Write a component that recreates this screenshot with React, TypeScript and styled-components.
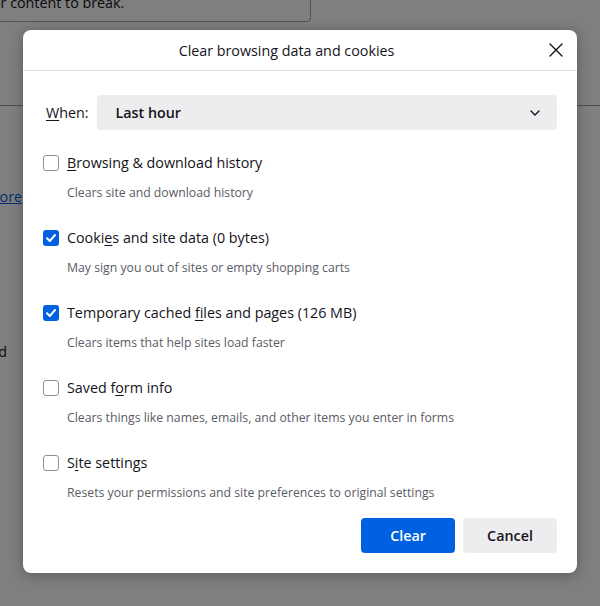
import React from "react";
import styled, { createGlobalStyle } from "styled-components";

const FONT = `"Open Sans", "Noto Sans", "Liberation Sans", sans-serif`;

const GlobalStyle = createGlobalStyle`
  html, body { margin: 0; padding: 0; }
  body { font-family: ${FONT}; overflow: hidden; background: #fff; }
  * { box-sizing: border-box; }
`;

/* ---------- background page ---------- */
const Page = styled.div`
  position: relative;
  width: 600px;
  height: 606px;
  overflow: hidden;
  background: #ffffff;
  color: #15141a;
  font-size: 14.3px;
  line-height: 20px;
`;

const PageContent = styled.div`
  display: flex;
  flex-direction: column;
`;

const NoticeBox = styled.div`
  margin: -20px 0 0 -30px;
  width: 341px;
  padding: 12px 10px 8px 21px;
  border: 1px solid #a8a8b0;
  border-radius: 4px;
`;

const Rule = styled.div`
  margin-top: 83px;
  height: 1px;
  background: #9f9fa6;
`;

const BgLine = styled.div<{ $top: number; $end: number }>`
  margin-top: ${(p) => p.$top}px;
  margin-left: -200px;
  width: ${(p) => 200 + p.$end}px;
  text-align: right;
  white-space: nowrap;
`;

const BgLink = styled.a`
  color: #0061e0;
  text-decoration: underline;
`;

/* ---------- overlay + dialog ---------- */
const Overlay = styled.div`
  position: absolute;
  inset: 0;
  background: rgba(0, 0, 0, 0.5);
  display: flex;
  justify-content: center;
  align-items: flex-start;
  padding-top: 30px;
`;

const Dialog = styled.div`
  width: 554px;
  background: #ffffff;
  border-radius: 8px;
  box-shadow: 0 2px 14px rgba(0, 0, 0, 0.3);
  display: flex;
  flex-direction: column;
  color: #15141a;
  font-family: ${FONT};
`;

const Header = styled.div`
  height: 41px;
  display: flex;
  align-items: center;
  padding-right: 7px;
  border-bottom: 1px solid #e0e0e6;
`;

const Title = styled.h1`
  flex: 1;
  margin: 0;
  padding: 1px 0 0 8px;
  text-align: center;
  font-size: 14.3px;
  font-weight: 500;
  line-height: 20px;
`;

const CloseButton = styled.button`
  width: 28px;
  height: 28px;
  border: none;
  background: transparent;
  padding: 0;
  display: flex;
  align-items: center;
  justify-content: center;
  color: #15141a;
`;

const Body = styled.div`
  padding: 24px 20px 20px 20px;
  display: flex;
  flex-direction: column;
`;

const WhenRow = styled.div`
  display: flex;
  align-items: center;
  gap: 8px;
`;

const WhenLabel = styled.label`
  padding-left: 3px;
  font-size: 14.3px;
  line-height: 20px;
`;

const AccessKey = styled.span`
  text-decoration: underline;
  text-underline-offset: 2px;
  text-decoration-thickness: 1px;
`;

const Select = styled.div`
  flex: 1;
  height: 35px;
  border-radius: 4px;
  background: #ededf0;
  display: flex;
  align-items: center;
  justify-content: space-between;
  padding: 0 17px 0 19px;
  font-size: 14.3px;
  font-weight: 600;
`;

const Options = styled.div`
  margin-top: 23px;
  display: flex;
  flex-direction: column;
  gap: 25px;
`;

const Option = styled.div`
  display: flex;
  flex-direction: column;
  gap: 10px;
`;

const OptionLine = styled.label`
  display: flex;
  align-items: center;
  gap: 8px;
  height: 20px;
  font-size: 14.3px;
  line-height: 20px;
`;

const Box = styled.span<{ $checked: boolean }>`
  width: 16px;
  height: 16px;
  flex: none;
  border-radius: 3px;
  border: ${(p) => (p.$checked ? "none" : "1px solid #8f8f9d")};
  background: ${(p) => (p.$checked ? "#0061e0" : "#ffffff")};
  display: flex;
  align-items: center;
  justify-content: center;
`;

const Description = styled.div`
  padding-left: 24px;
  height: 20px;
  font-size: 12.25px;
  line-height: 20px;
  color: #5b5b66;
`;

const Footer = styled.div`
  margin-top: 15px;
  display: flex;
  justify-content: flex-end;
  gap: 8px;
`;

const Button = styled.button<{ $primary?: boolean }>`
  min-width: 94px;
  height: 35px;
  padding: 0 16px;
  border: none;
  border-radius: 4px;
  font-family: ${FONT};
  font-size: 14.3px;
  font-weight: 600;
  background: ${(p) => (p.$primary ? "#0061e0" : "#ededf0")};
  color: ${(p) => (p.$primary ? "#ffffff" : "#15141a")};
`;

type Item = {
  pre: string;
  key: string;
  post: string;
  desc: string;
  checked: boolean;
};

const items: Item[] = [
  { pre: "", key: "B", post: "rowsing & download history", desc: "Clears site and download history", checked: false },
  { pre: "Cooki", key: "e", post: "s and site data (0 bytes)", desc: "May sign you out of sites or empty shopping carts", checked: true },
  { pre: "Temporary cached ", key: "f", post: "iles and pages (126 MB)", desc: "Clears items that help sites load faster", checked: true },
  { pre: "Saved f", key: "o", post: "rm info", desc: "Clears things like names, emails, and other items you enter in forms", checked: false },
  { pre: "S", key: "i", post: "te settings", desc: "Resets your permissions and site preferences to original settings", checked: false },
];

const Check = () => (
  <svg width="12" height="12" viewBox="0 0 12 12" fill="none">
    <path d="M2 6.3 L4.8 9 L10 3" stroke="#fff" strokeWidth="2" strokeLinecap="round" strokeLinejoin="round" />
  </svg>
);

export default function App() {
  return (
    <>
      <GlobalStyle />
      <Page>
        <PageContent>
          <NoticeBox>or content to break.</NoticeBox>
          <Rule />
          <BgLine $top={81} $end={22}>
            <BgLink>Learn more</BgLink>
          </BgLine>
          <BgLine $top={135} $end={7}>
            Cookies will be saved
          </BgLine>
        </PageContent>
        <Overlay>
          <Dialog>
            <Header>
              <Title>Clear browsing data and cookies</Title>
              <CloseButton aria-label="Close">
                <svg width="14" height="14" viewBox="0 0 14 14" fill="none">
                  <path d="M1 1 L13 13 M13 1 L1 13" stroke="#15141a" strokeWidth="1.4" strokeLinecap="round" />
                </svg>
              </CloseButton>
            </Header>
            <Body>
              <WhenRow>
                <WhenLabel>
                  <AccessKey>W</AccessKey>hen:
                </WhenLabel>
                <Select>
                  <span>Last hour</span>
                  <svg width="10" height="6" viewBox="0 0 10 6" fill="none">
                    <path d="M1 1 L5 5 L9 1" stroke="#15141a" strokeWidth="1.4" strokeLinecap="round" strokeLinejoin="round" />
                  </svg>
                </Select>
              </WhenRow>
              <Options>
                {items.map((it) => (
                  <Option key={it.desc}>
                    <OptionLine>
                      <Box $checked={it.checked}>{it.checked && <Check />}</Box>
                      <span>
                        {it.pre}
                        <AccessKey>{it.key}</AccessKey>
                        {it.post}
                      </span>
                    </OptionLine>
                    <Description>{it.desc}</Description>
                  </Option>
                ))}
              </Options>
              <Footer>
                <Button $primary>Clear</Button>
                <Button>Cancel</Button>
              </Footer>
            </Body>
          </Dialog>
        </Overlay>
      </Page>
    </>
  );
}
